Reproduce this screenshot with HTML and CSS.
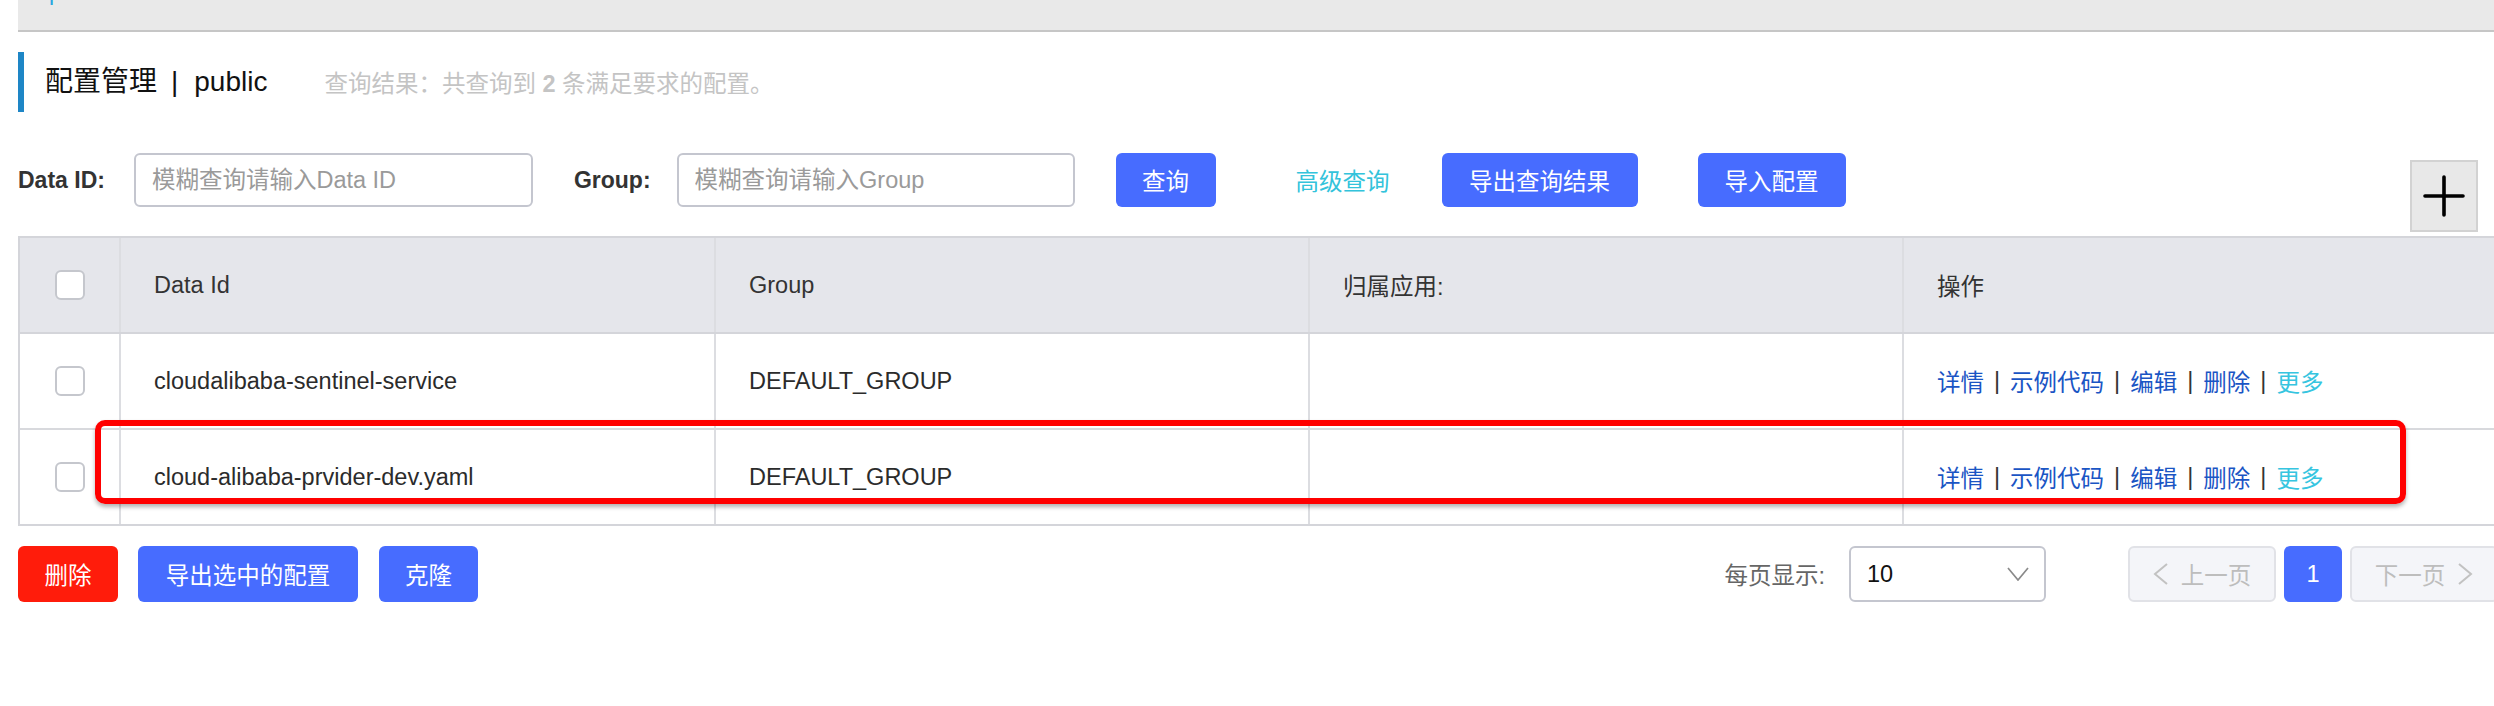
FILE: index.html
```html
<!DOCTYPE html>
<html lang="zh-CN">
<head>
<meta charset="utf-8">
<title>配置管理</title>
<link rel="stylesheet" href="styles.css">
</head>
<body>
<div class="page">
  <div class="topbar"><span class="crumb">public</span></div>

  <div class="title-row">
    <h1 class="title">配置管理<span class="title-sep">|</span>public</h1>
    <span class="result">查询结果：共查询到 <b>2</b> 条满足要求的配置。</span>
  </div>

  <div class="search-row">
    <label class="field-label label-id">Data ID:</label>
    <input class="input" type="text" placeholder="模糊查询请输入Data ID">
    <label class="field-label label-group">Group:</label>
    <input class="input input-group" type="text" placeholder="模糊查询请输入Group">
    <button class="btn btn-primary btn-query">查询</button>
    <a class="adv-link">高级查询</a>
    <button class="btn btn-primary btn-export">导出查询结果</button>
    <button class="btn btn-primary btn-import">导入配置</button>
    <button class="btn-add" aria-label="add">
      <svg width="42" height="42" viewBox="0 0 42 42"><path d="M21 2V40M2 21H40" stroke="#000" stroke-width="3.6" stroke-linecap="round" fill="none"/></svg>
    </button>
  </div>

  <div class="table-wrap">
    <div class="table">
      <div class="tr thead">
        <div class="td td-check"><span class="checkbox"></span></div>
        <div class="td">Data Id</div>
        <div class="td">Group</div>
        <div class="td">归属应用:</div>
        <div class="td">操作</div>
      </div>
      <div class="tr">
        <div class="td td-check"><span class="checkbox"></span></div>
        <div class="td">cloudalibaba-sentinel-service</div>
        <div class="td">DEFAULT_GROUP</div>
        <div class="td"></div>
        <div class="td ops"><a class="op">详情</a><span class="op-sep">|</span><a class="op">示例代码</a><span class="op-sep">|</span><a class="op">编辑</a><span class="op-sep">|</span><a class="op">删除</a><span class="op-sep">|</span><a class="op op-more">更多</a></div>
      </div>
      <div class="tr tr-last">
        <div class="td td-check"><span class="checkbox"></span></div>
        <div class="td">cloud-alibaba-prvider-dev.yaml</div>
        <div class="td">DEFAULT_GROUP</div>
        <div class="td"></div>
        <div class="td ops"><a class="op">详情</a><span class="op-sep">|</span><a class="op">示例代码</a><span class="op-sep">|</span><a class="op">编辑</a><span class="op-sep">|</span><a class="op">删除</a><span class="op-sep">|</span><a class="op op-more">更多</a></div>
      </div>
    </div>
    <div class="highlight"></div>
  </div>

  <div class="footer">
    <button class="btn btn-danger btn-del">删除</button>
    <button class="btn btn-primary btn-export-sel">导出选中的配置</button>
    <button class="btn btn-primary btn-clone">克隆</button>
    <div class="pager">
      <span class="page-size-label">每页显示:</span>
      <div class="select"><span>10</span>
        <svg width="22" height="14" viewBox="0 0 22 14"><polyline points="1,1 11,13 21,1" fill="none" stroke="#8a8a8a" stroke-width="1.7"/></svg>
      </div>
      <button class="page-btn page-prev">
        <svg width="15" height="22" viewBox="0 0 15 22"><polyline points="14,1 2,11 14,21" fill="none" stroke="#c2c2c2" stroke-width="2"/></svg>
        <span>上一页</span>
      </button>
      <button class="page-btn page-cur">1</button>
      <button class="page-btn page-next">
        <span>下一页</span>
        <svg width="15" height="22" viewBox="0 0 15 22"><polyline points="1,1 13,11 1,21" fill="none" stroke="#c2c2c2" stroke-width="2"/></svg>
      </button>
    </div>
  </div>
</div>
</body>
</html>
```

FILE: styles.css
```css
* {
  box-sizing: border-box;
}

html, body {
  margin: 0;
  padding: 0;
  overflow: hidden;
  background: #fff;
}

body {
  font-family: "Liberation Sans", "Noto Sans CJK SC", sans-serif;
  font-size: 23.5px;
  color: #333;
}

.page {
  width: 2480px;
  margin-left: 18px;
}

/* top grey band */
.topbar {
  height: 32px;
  background: #e9e9e9;
  border-bottom: 2px solid #c6c6c6;
  overflow: hidden;
}

.crumb {
  display: block;
  margin-left: 31px;
  margin-top: -19px;
  font-size: 23px;
  line-height: 23px;
  color: #2ba6e0;
}

/* title */
.title-row {
  display: flex;
  align-items: center;
  margin-top: 20px;
  height: 60px;
  border-left: 6px solid #1e86c6;
  padding-left: 21px;
}

.title {
  margin: 0;
  font-size: 28px;
  font-weight: normal;
  color: #111;
  line-height: 1;
  display: flex;
  align-items: center;
}

.title-sep {
  margin: 0 16px 0 14px;
}

.result {
  margin-left: 57px;
  color: #c4c4c4;
  font-size: 23.5px;
}

.result b {
  font-weight: bold;
}

/* search row */
.search-row {
  display: flex;
  align-items: flex-start;
  margin-top: 41px;
  height: 79px;
}

.field-label {
  height: 54px;
  display: flex;
  align-items: center;
  font-weight: bold;
  font-size: 23px;
  color: #333;
}

.label-id {
  margin-right: 29px;
}

.label-group {
  margin-left: 41px;
  margin-right: 26px;
}

.input {
  width: 399px;
  height: 54px;
  border: 2px solid #c4c6cf;
  border-radius: 6px;
  padding: 0 16px;
  font-family: inherit;
  font-size: 23.5px;
  color: #333;
  outline: none;
  background: #fff;
}

.input::placeholder {
  color: #9a9a9a;
}

.input-group {
  width: 398px;
}

.btn {
  height: 54px;
  border: none;
  border-radius: 6px;
  font-family: inherit;
  font-size: 23.5px;
  color: #fff;
  padding: 0;
  display: flex;
  align-items: center;
  justify-content: center;
}

.btn-primary {
  background: #476cff;
}

.btn-danger {
  background: #ff1c0b;
}

.btn-query {
  width: 100px;
  margin-left: 41px;
}

.adv-link {
  height: 54px;
  display: flex;
  align-items: center;
  margin-left: 80px;
  color: #33c3db;
}

.btn-export {
  width: 196px;
  margin-left: 52px;
}

.btn-import {
  width: 148px;
  margin-left: 60px;
}

.btn-add {
  margin-left: auto;
  margin-right: 20px;
  margin-top: 7px;
  width: 68px;
  height: 72px;
  background: #e8e8e8;
  border: 2px solid #d2d2d2;
  padding: 0;
  display: flex;
  align-items: center;
  justify-content: center;
}

/* table */
.table-wrap {
  position: relative;
  margin-top: 4px;
}

.table {
  border: 2px solid #d4d5da;
}

.tr {
  display: grid;
  grid-template-columns: 101px 595px 594px 594px 1fr;
  height: 96px;
  border-bottom: 2px solid #d8d9dd;
}

.tr-last {
  height: 94px;
  border-bottom: none;
}

.thead {
  background: #e5e6eb;
  border-bottom-color: #d4d5da;
}

.td {
  display: flex;
  align-items: center;
  padding-left: 33px;
  border-right: 2px solid #dcdde1;
  color: #2b2b2b;
  white-space: nowrap;
}

.td:last-child {
  border-right: none;
}

.thead .td {
  color: #333;
}

.td-check {
  padding-left: 0;
  justify-content: center;
}

.checkbox {
  display: block;
  width: 30px;
  height: 30px;
  border: 2px solid #c5c7cd;
  border-radius: 6px;
  background: #fff;
}

.op {
  color: #1a55c4;
}

.op-more {
  color: #36c5e0;
}

.op-sep {
  margin: 0 10px;
  color: #333;
}

.highlight {
  position: absolute;
  left: 77px;
  top: 184px;
  width: 2311px;
  height: 84px;
  border: 6px solid #ff0000;
  border-radius: 10px;
  box-shadow: 0 3px 4px rgba(0, 0, 0, 0.3);
  pointer-events: none;
}

/* footer */
.footer {
  display: flex;
  align-items: center;
  margin-top: 20px;
  height: 56px;
}

.footer .btn {
  height: 56px;
}

.btn-del {
  width: 100px;
}

.btn-export-sel {
  width: 220px;
  margin-left: 20px;
}

.btn-clone {
  width: 99px;
  margin-left: 21px;
}

.pager {
  margin-left: auto;
  display: flex;
  align-items: center;
  height: 56px;
}

.page-size-label {
  color: #666;
}

.select {
  margin-left: 24px;
  width: 197px;
  height: 56px;
  border: 2px solid #c4c6cf;
  border-radius: 6px;
  display: flex;
  align-items: center;
  justify-content: space-between;
  padding: 0 15px 0 16px;
  color: #111;
}

.page-btn {
  height: 56px;
  border-radius: 6px;
  font-family: inherit;
  font-size: 23.5px;
  padding: 0;
  display: flex;
  align-items: center;
  justify-content: center;
  gap: 13px;
}

.page-prev,
.page-next {
  width: 148px;
  background: #f4f5f9;
  border: 2px solid #e1e2e7;
  color: #bdbdbd;
}

.page-prev {
  margin-left: 82px;
}

.page-cur {
  width: 58px;
  margin-left: 8px;
  background: #476cff;
  border: none;
  color: #fff;
}

.page-next {
  margin-left: 8px;
}
```
